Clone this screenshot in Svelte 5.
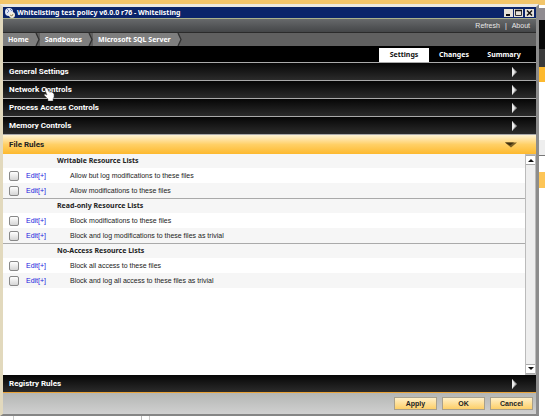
<script>

    // variables
    let active_tab = $state('Settings');
    let open_section = $state('File Rules');

    // config
    const crumbs = ['Home', 'Sandboxes', 'Microsoft SQL Server'];
    const tabs = ['Settings', 'Changes', 'Summary'];
    const sections = [
        'General Settings',
        'Network Controls',
        'Process Access Controls',
        'Memory Controls',
        'File Rules'
    ];
    const groups = [
        {
            title: 'Writable Resource Lists',
            rules: ['Allow but log modifications to these files', 'Allow modifications to these files']
        },
        {
            title: 'Read-only Resource Lists',
            rules: ['Block modifications to these files', 'Block and log modifications to these files as trivial']
        },
        {
            title: 'No-Access Resource Lists',
            rules: ['Block all access to these files', 'Block and log all access to these files as trivial']
        }
    ];

</script>


{#snippet header(name)}
    <button class="section" class:open={name === open_section} onclick={() => open_section = name}>
        <span>{name}</span>
        {#if name === open_section}
            <svg class="arrow" width="12" height="8" viewBox="0 0 12 8">
                <path d="M0 1.5H12L6 6.5Z" fill="#7a6026" />
                <path d="M0 1.5H9L5 4.5Z" fill="#3e3010" />
            </svg>
        {:else}
            <svg class="arrow" width="12" height="12" viewBox="0 0 12 12">
                <path d="M4 1L9 6L4 11Z" fill="#a8a8a8" />
                <path d="M4 1L7 6L4 11Z" fill="#ededed" />
            </svg>
        {/if}
    </button>
{/snippet}


<div class="desktop">
    <div class="window">
        <header class="titlebar">
            <svg width="10" height="10" viewBox="0 0 10 10">
                <circle cx="4" cy="4" r="4" fill="#dfe6f6" />
                <path d="M2 1L4 3L2 5M5 1L7 3" fill="none" stroke="#7789bd" />
                <circle cx="7" cy="7" r="3" fill="#f4efdc" />
                <path d="M5 7L7 8L8 6" fill="none" stroke="#9a8a60" />
            </svg>
            <h1>Whitelisting test policy v6.0.0 r76 - Whitelisting</h1>
            <div class="controls">
                <button aria-label="Minimize">
                    <svg width="9" height="8" viewBox="0 0 9 8"><path d="M2 6H6" stroke="#111" stroke-width="2" /></svg>
                </button>
                <button aria-label="Maximize">
                    <svg width="9" height="8" viewBox="0 0 9 8">
                        <path d="M1.5 1V6.5H7.5V1" fill="none" stroke="#333" />
                        <path d="M1 1.5H8" stroke="#111" stroke-width="1.5" />
                    </svg>
                </button>
                <button class="close" aria-label="Close">
                    <svg width="9" height="8" viewBox="0 0 9 8"><path d="M2 1.5L7 6.5M7 1.5L2 6.5" stroke="#111" stroke-width="1.5" /></svg>
                </button>
            </div>
        </header>

        <div class="toolbar">
            <a href="#refresh">Refresh</a>
            <span>|</span>
            <a href="#about">About</a>
        </div>

        <nav class="crumbs">
            {#each crumbs as crumb}
                <a href="#{crumb}">{crumb}</a>
                <svg width="6" height="13" viewBox="0 0 6 13">
                    <path d="M0 0H2L5 6.5L2 13H0Z" fill="#7e7e7e" />
                    <path d="M2 0L5 6.5L2 13" fill="none" stroke="#303030" stroke-width="1.3" />
                </svg>
            {/each}
        </nav>

        <div class="tabs" role="tablist">
            {#each tabs as tab}
                <button role="tab" aria-selected={tab === active_tab} onclick={() => active_tab = tab}>{tab}</button>
            {/each}
        </div>

        <div class="sections">
            {#each sections as name}
                {@render header(name)}
            {/each}
            <svg class="pointer" width="11" height="13" viewBox="0 0 11 13">
                <path d="M1 0H3L5 4L8 4L10 6V9L9 11V13H4V11L0 7L1 6L3 7L1 2Z" fill="#fff" stroke="#555" stroke-width="0.5" />
            </svg>
        </div>

        <div class="content">
            <table>
                {#each groups as group, g}
                    <tbody>
                        <tr>
                            <th class="check"></th>
                            <th class="edit"></th>
                            <th class="name" scope="rowgroup">{group.title}</th>
                        </tr>
                        {#each group.rules as rule, r}
                            <tr>
                                <td class="check"><input type="checkbox" id="rule-{g}-{r}" /></td>
                                <td class="edit"><a href="#rule-{g}-{r}">Edit[+]</a></td>
                                <td class="name"><label for="rule-{g}-{r}">{rule}</label></td>
                            </tr>
                        {/each}
                    </tbody>
                {/each}
            </table>
            <div class="scrollbar">
                <button aria-label="Scroll up">
                    <svg width="6" height="4" viewBox="0 0 6 4"><path d="M0 4L3 1L6 4Z" fill="#111" /></svg>
                </button>
                <button aria-label="Scroll down">
                    <svg width="6" height="4" viewBox="0 0 6 4"><path d="M0 0H6L3 3Z" fill="#111" /></svg>
                </button>
            </div>
        </div>

        {@render header('Registry Rules')}

        <footer>
            <button>Apply</button>
            <button>OK</button>
            <button>Cancel</button>
        </footer>
    </div>

    <div class="behind"></div>
</div>



<style>

    :global(body) {
        background: #fff;
    }

    .desktop {
        display: flex;
        box-sizing: border-box;
        min-height: 100vh;
        padding-bottom: 4px;
        border-top: 4px solid #f2c56a;
        font-family: "Liberation Sans", Arial, sans-serif;
        font-size: 7px;
        line-height: 14px;
        color: #222;
        background: linear-gradient(#bbb, #bbb) 141px 100% / 1px 4px no-repeat,
            linear-gradient(#ccc, #ccc) 149px 100% / 1px 4px no-repeat,
            linear-gradient(#ccc, #ccc) 13px 100% / 1px 4px no-repeat,
            #fff;
    }

    .window {
        display: flex;
        flex: 1;
        flex-direction: column;
        border: 3px solid #ece9df;
        border-left-color: #e2d9bd;
        border-right-color: #8c8c8c;
        border-bottom: 2px solid #858585;
    }

    /* strip of the window that lies behind this one */
    .behind {
        width: 6px;
        background: linear-gradient(
            #f2c56a 0 1px, #fff 1px 4px, #8f8b90 4px 16px, #080808 16px 45px, #3a3a3a 45px 63px,
            #fdb92e 63px 78px, #fff 78px 136px, #eee 136px 151px, #777 151px 152px,
            #fff 152px 168px, #fdc557 168px 184px, #fff 184px
        );
    }

    button {
        padding: 0;
        border: 0;
        font-family: inherit;
        font-size: inherit;
        font-weight: bold;
        line-height: inherit;
        color: inherit;
    }

    svg {
        display: block;
        flex: none;
    }

    a {
        color: inherit;
        text-decoration: none;
    }

    .titlebar {
        display: flex;
        align-items: center;
        gap: 2px;
        height: 11px;
        padding: 0 2px;
        border-bottom: 1px solid #a9b18c;
        background: #0a246a;
        color: #fff;
    }

    h1,
    .crumbs,
    .tabs {
        font-family: "Noto Sans", sans-serif;
        font-size: 7px;
        font-weight: bold;
    }

    h1 {
        flex: 1;
        margin: 0;
        line-height: 11px;
    }

    .controls {
        display: flex;
        gap: 1px;
    }

    .controls button {
        width: 9px;
        height: 8px;
        background: #e6e2d8;
    }

    .controls .close {
        margin-left: 1px;
    }

    .toolbar {
        display: flex;
        align-items: center;
        justify-content: flex-end;
        gap: 5px;
        height: 13px;
        padding-right: 6px;
        background: linear-gradient(#67696b, #444648);
        border-bottom: 1px solid #2b2b2b;
        color: #e8e8e8;
    }

    .crumbs {
        display: flex;
        align-items: center;
        height: 13px;
        background: #606060;
        color: #fff;
    }

    .crumbs a {
        padding: 0 5px;
        background: #7e7e7e;
        line-height: 13px;
    }

    .tabs {
        display: flex;
        justify-content: flex-end;
        height: 14px;
        padding: 2px 7px 0 0;
        border-bottom: 1px solid #aaa;
        background: #000;
        color: #fff;
    }

    .tabs button {
        width: 50px;
        background: none;
    }

    .tabs button[aria-selected="true"] {
        background: #fff;
        color: #111;
    }

    .sections {
        position: relative;
    }

    .section {
        display: flex;
        align-items: center;
        justify-content: space-between;
        box-sizing: border-box;
        width: 100%;
        height: 18px;
        padding: 0 16px 0 6px;
        border-bottom: 1px solid #aaa;
        background: linear-gradient(#060606, #2b2b2b);
        color: #fff;
        font-family: Roboto, sans-serif;
        font-size: 8px;
        text-align: left;
    }

    .section.open {
        height: 19px;
        border-bottom: 0;
        background: linear-gradient(#fff3d4, #ffd066 50%, #fdb92e);
        color: #222;
    }

    .section.open .arrow {
        margin-right: 3px;
    }

    .pointer {
        position: absolute;
        left: 41px;
        top: 25px;
    }

    .content {
        display: flex;
        flex: 1;
        background: #fff;
    }

    table {
        flex: 1;
        align-self: flex-start;
        border-spacing: 0;
    }

    th,
    td {
        padding: 0;
        text-align: left;
    }

    th {
        height: 14px;
        font-family: "Noto Sans", sans-serif;
    }

    td {
        height: 15px;
    }

    tbody + tbody th {
        border-top: 1px solid #aaa;
    }

    tr:nth-child(odd) {
        background: #f6f6f6;
    }

    .check {
        width: 23px;
    }

    .edit {
        width: 31px;
        color: #2222dd;
    }

    td.name {
        padding-left: 13px;
    }

    input {
        display: block;
        appearance: none;
        box-sizing: border-box;
        width: 10px;
        height: 10px;
        margin: 0 0 0 6px;
        border: 1px solid #888;
        border-radius: 2px;
        background: linear-gradient(#fff, #d5d5d5);
    }

    .scrollbar {
        display: flex;
        flex-direction: column;
        justify-content: space-between;
        box-sizing: border-box;
        width: 11px;
        border: 1px solid #bbb;
        background: #eee;
    }

    .scrollbar button {
        display: flex;
        align-items: center;
        justify-content: center;
        height: 10px;
        background: #fff;
        border: 0 solid #aaa;
        border-width: 1px 0;
    }

    .content + .section {
        border-bottom-color: #e8a33a;
    }

    footer {
        display: flex;
        align-items: center;
        justify-content: flex-end;
        gap: 5px;
        height: 21px;
        padding-right: 3px;
        background: linear-gradient(#b4b6b4, #d0d0d0);
    }

    footer button {
        box-sizing: border-box;
        width: 43px;
        height: 13px;
        border: 1px solid #a8a08c;
        background: linear-gradient(#fff0c8, #fdcf68);
        line-height: 11px;
    }

</style>
